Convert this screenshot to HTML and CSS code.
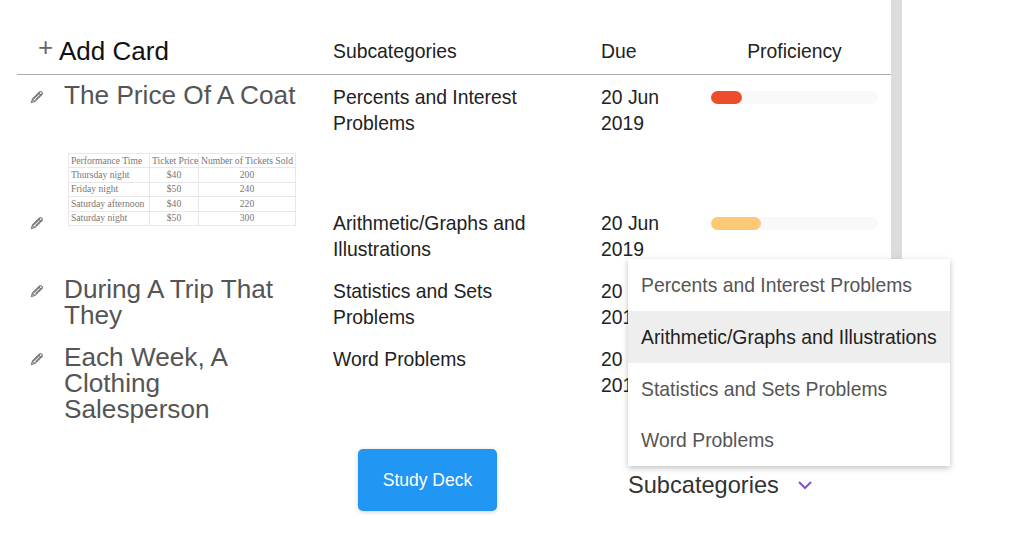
FILE: index.html
```html
<!DOCTYPE html>
<html>
<head>
  <meta charset="utf-8">
  <link rel="stylesheet" href="styles.css">
</head>
<body>
  <div class="page">
    <div class="deck-panel">
      <div class="deck-header">
        <div class="add-card"><span class="plus">+</span><span>Add Card</span></div>
        <div>Subcategories</div>
        <div>Due</div>
        <div class="proficiency-title">Proficiency</div>
      </div>

      <div class="card-row first-row">
        <svg class="pencil" viewBox="0 0 16 16"><path d="M2.5 13.5l.9-3.4 7.2-7.2a1.2 1.2 0 0 1 1.7 0l.8.8a1.2 1.2 0 0 1 0 1.7l-7.2 7.2zM3.4 10.1l2.5 2.5M9.6 3.9l2.5 2.5M5 9.5l6-6M6.5 11l6-6"/></svg>
        <div class="card-title">The Price Of A Coat</div>
        <div>Percents and Interest Problems</div>
        <div>20 Jun 2019</div>
        <div class="bar"><div class="bar-fill red" style="width: 31px"></div></div>
      </div>

      <div class="card-row image-row">
        <svg class="pencil" viewBox="0 0 16 16"><path d="M2.5 13.5l.9-3.4 7.2-7.2a1.2 1.2 0 0 1 1.7 0l.8.8a1.2 1.2 0 0 1 0 1.7l-7.2 7.2zM3.4 10.1l2.5 2.5M9.6 3.9l2.5 2.5M5 9.5l6-6M6.5 11l6-6"/></svg>
        <table class="ticket-table">
          <colgroup><col class="col-time"><col class="col-price"><col class="col-sold"></colgroup>
          <tr><td>Performance Time</td><td class="mid">Ticket Price</td><td class="mid">Number of Tickets Sold</td></tr>
          <tr><td>Thursday night</td><td class="mid">$40</td><td class="mid">200</td></tr>
          <tr><td>Friday night</td><td class="mid">$50</td><td class="mid">240</td></tr>
          <tr><td>Saturday afternoon</td><td class="mid">$40</td><td class="mid">220</td></tr>
          <tr><td>Saturday night</td><td class="mid">$50</td><td class="mid">300</td></tr>
        </table>
        <div>Arithmetic/Graphs and Illustrations</div>
        <div>20 Jun 2019</div>
        <div class="bar"><div class="bar-fill orange" style="width: 50px"></div></div>
      </div>

      <div class="card-row">
        <svg class="pencil" viewBox="0 0 16 16"><path d="M2.5 13.5l.9-3.4 7.2-7.2a1.2 1.2 0 0 1 1.7 0l.8.8a1.2 1.2 0 0 1 0 1.7l-7.2 7.2zM3.4 10.1l2.5 2.5M9.6 3.9l2.5 2.5M5 9.5l6-6M6.5 11l6-6"/></svg>
        <div class="card-title">During A Trip That They</div>
        <div>Statistics and Sets Problems</div>
        <div>20 Jun 2019</div>
        <div></div>
      </div>

      <div class="card-row">
        <svg class="pencil" viewBox="0 0 16 16"><path d="M2.5 13.5l.9-3.4 7.2-7.2a1.2 1.2 0 0 1 1.7 0l.8.8a1.2 1.2 0 0 1 0 1.7l-7.2 7.2zM3.4 10.1l2.5 2.5M9.6 3.9l2.5 2.5M5 9.5l6-6M6.5 11l6-6"/></svg>
        <div class="card-title">Each Week, A Clothing Salesperson</div>
        <div>Word Problems</div>
        <div>20 Jun 2019</div>
        <div></div>
      </div>
    </div>

    <div class="footer">
      <button class="study-btn">Study Deck</button>
      <div class="filter">
        <span>Subcategories</span>
        <svg class="chevron" viewBox="0 0 16 10"><path d="M2 2l6 6 6-6"/></svg>
      </div>
    </div>

    <ul class="menu">
      <li>Percents and Interest Problems</li>
      <li class="selected">Arithmetic/Graphs and Illustrations</li>
      <li>Statistics and Sets Problems</li>
      <li>Word Problems</li>
    </ul>
  </div>
</body>
</html>
```

FILE: styles.css
```css
html, body {
  margin: 0;
  height: 535px;
  overflow: hidden;
  background: white;
}

body {
  font-family: "Liberation Sans", Arial, sans-serif;
  font-size: 19.35px;
  color: #222;
}

.page {
  position: relative;
  height: 535px;
}

.deck-panel {
  box-sizing: border-box;
  width: 902px;
  height: 449px;
  padding-left: 17px;
  border-right: 11px solid #dcdcdc;
}

.deck-header {
  display: grid;
  grid-template-columns: 316px 268px 110px 167px;
  box-sizing: border-box;
  height: 75px;
  padding-top: 38px;
  border-bottom: 1px solid #aaa;
  line-height: 26px;
}

.add-card {
  display: flex;
  width: 160px;
  margin-left: 21px;
  font-size: 26px;
  color: #111;
}

.plus {
  width: 21px;
  margin-top: -4px;
  color: #666;
  font-size: 26px;
}

.proficiency-title {
  text-align: center;
}

.card-row {
  display: grid;
  grid-template-columns: 48px 268px 268px 110px 180px;
  padding-top: 8px;
  padding-bottom: 8px;
  line-height: 26px;
}

.first-row {
  padding-top: 9px;
  padding-bottom: 15px;
}

.card-row > div:nth-child(3),
.card-row > div:nth-child(4) {
  padding-right: 40px;
}

.image-row {
  padding-top: 0;
}

.image-row > div:nth-child(3),
.image-row > div:nth-child(4) {
  margin-top: 59px;
}

.pencil {
  width: 16px;
  height: 16px;
  margin: 5px 0 0 12px;
  fill: none;
  stroke: #777;
  stroke-width: 1.1;
}

.image-row > .pencil {
  margin-top: 64px;
}

.card-title {
  margin: -2px 0 0 -1px;
  padding-right: 28px;
  font-size: 26.2px;
  color: #555;
}

.ticket-table {
  align-self: start;
  width: 228px;
  height: 73px;
  margin: 2px 0 0 3px;
  border-collapse: collapse;
  table-layout: fixed;
  font-family: "Liberation Serif", serif;
  font-size: 9.6px;
  line-height: 12px;
  color: #777;
}

.col-time {
  width: 81px;
}

.col-price {
  width: 49px;
}

.ticket-table td {
  padding: 0 2px;
  border: 1px solid #e8e8e8;
  white-space: nowrap;
}

.ticket-table .mid {
  text-align: center;
}

.bar {
  width: 167px;
  height: 13px;
  margin-top: 7px;
  border-radius: 7px;
  background: #f9f9f9;
}

.image-row > .bar {
  margin-top: 66px;
}

.bar-fill {
  height: 13px;
  border-radius: 7px;
}

.bar-fill.red {
  background: #ec4e2c;
}

.bar-fill.orange {
  background: #fdc976;
}

.footer {
  display: flex;
  align-items: flex-start;
  padding-left: 358px;
}

.study-btn {
  width: 139px;
  height: 62px;
  border: none;
  border-radius: 5px;
  background: #2196f3;
  color: white;
  font-family: inherit;
  font-size: 17.5px;
  box-shadow: 0 1px 4px rgba(0, 0, 0, 0.2);
}

.filter {
  display: flex;
  align-items: center;
  gap: 18px;
  margin: 21px 0 0 131px;
  font-size: 23.6px;
  line-height: 30px;
  color: #333;
}

.chevron {
  width: 16px;
  height: 10px;
  fill: none;
  stroke: #7e57c2;
  stroke-width: 2;
}

.menu {
  position: absolute;
  top: 259px;
  left: 628px;
  width: 322px;
  margin: 0;
  padding: 0;
  list-style: none;
  background: white;
  box-shadow: 0 2px 6px rgba(0, 0, 0, 0.25);
  font-size: 19.35px;
  color: #555;
}

.menu li {
  height: 51.75px;
  padding-left: 13px;
  line-height: 52px;
  white-space: nowrap;
}

.menu .selected {
  background: #eee;
  color: #222;
}
```
